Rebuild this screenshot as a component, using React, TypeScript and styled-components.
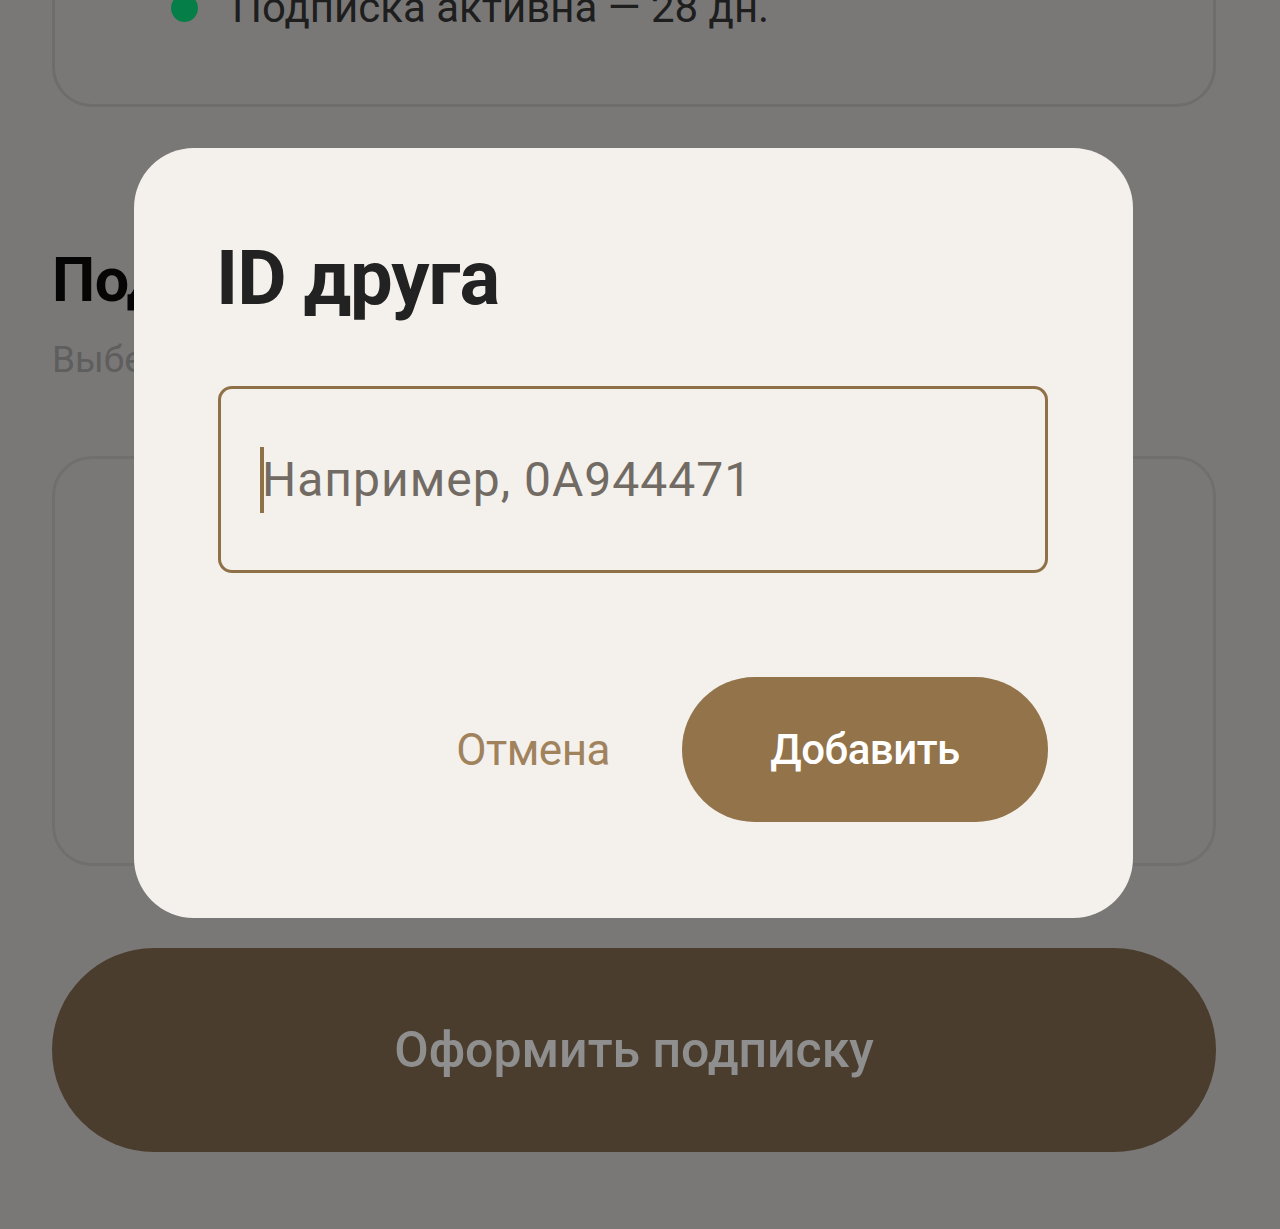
import React from "react";
import styled, { createGlobalStyle } from "styled-components";

const GlobalStyle = createGlobalStyle`
  html, body {
    margin: 0;
    padding: 0;
    background: #d9d7d5;
    overflow: hidden;
  }
  body {
    font-family: Roboto, "Noto Sans", Arial, sans-serif;
  }
  * { box-sizing: border-box; }
`;

const Page = styled.main`
  display: flex;
  flex-direction: column;
  padding: 0 64px 0 52px;
  margin-top: -91px;
  height: 1322px;
`;

const StatusCard = styled.section`
  border: 3px solid #c4c2bf;
  border-radius: 40px;
  padding: 72px 0 72px 116px;
  display: flex;
  align-items: center;
  gap: 34px;
`;

const Dot = styled.span`
  width: 27px;
  height: 28px;
  border-radius: 50%;
  background: #0ce07f;
  flex: none;
`;

const StatusText = styled.span`
  font-size: 42px;
  line-height: 48px;
  color: #363636;
`;

const SectionTitle = styled.h2`
  margin: 138px 0 0;
  font-size: 61px;
  line-height: 70px;
  font-weight: 700;
  color: #0a0a0a;
  letter-spacing: -0.5px;
`;

const SectionHint = styled.p`
  margin: 23px 0 0;
  font-size: 37px;
  line-height: 44px;
  color: #a8a8a8;
`;

const PlanCard = styled.section`
  margin-top: 74px;
  height: 410px;
  border: 3px solid #c8c6c3;
  border-radius: 40px;
`;

const SubmitButton = styled.button`
  margin-top: 82px;
  height: 204px;
  border: none;
  border-radius: 102px;
  background: #846d52;
  color: #ffffff;
  font-family: inherit;
  font-size: 50px;
  font-weight: 500;
`;

const Overlay = styled.div`
  position: fixed;
  inset: 0;
  background: rgba(0, 0, 0, 0.44);
  display: flex;
  align-items: flex-start;
  padding: 148px 0 0 134px;
`;

const Dialog = styled.div`
  width: 999px;
  height: 770px;
  border-radius: 60px;
  background: #f4f1ec;
  padding: 238px 85px 0 84px;
  display: flex;
  flex-direction: column;
  position: relative;
`;

const DialogTitle = styled.h1`
  position: absolute;
  top: 80px;
  left: 82px;
  margin: 0;
  font-size: 76px;
  line-height: 100px;
  font-weight: 700;
  color: #222222;
  letter-spacing: -1px;
`;

const Field = styled.label`
  height: 187px;
  border: 3px solid #8f7148;
  border-radius: 14px;
  display: flex;
  align-items: center;
  padding-left: 39px;
`;

const Caret = styled.span`
  width: 4px;
  height: 66px;
  background: #8f7148;
  flex: none;
  margin-right: -2px;
`;

const Input = styled.input`
  flex: 1;
  border: none;
  background: transparent;
  outline: none;
  font-family: inherit;
  font-size: 48px;
  letter-spacing: 1px;
  color: #2a2a2a;
  padding: 0;
  &::placeholder {
    color: #726b64;
  }
`;

const Actions = styled.div`
  margin-top: 104px;
  display: flex;
  justify-content: flex-end;
  align-items: center;
  gap: 50px;
`;

const CancelButton = styled.button`
  border: none;
  background: transparent;
  font-family: inherit;
  font-size: 44px;
  color: #a0825c;
  padding: 0 22px;
  height: 145px;
  letter-spacing: -0.5px;
`;

const AddButton = styled.button`
  width: 366px;
  height: 145px;
  border: none;
  border-radius: 73px;
  background: #92734a;
  color: #ffffff;
  font-family: inherit;
  font-size: 42px;
  font-weight: 500;
  letter-spacing: -0.5px;
`;

export default function App() {
  return (
    <>
      <GlobalStyle />
      <Page>
        <StatusCard>
          <Dot />
          <StatusText>Подписка активна — 28 дн.</StatusText>
        </StatusCard>
        <SectionTitle>Подарить подписку</SectionTitle>
        <SectionHint>Выберите срок подписки</SectionHint>
        <PlanCard />
        <SubmitButton>Оформить подписку</SubmitButton>
      </Page>
      <Overlay>
        <Dialog>
          <DialogTitle>ID друга</DialogTitle>
          <Field>
            <Caret />
            <Input placeholder="Например, 0A944471" />
          </Field>
          <Actions>
            <CancelButton>Отмена</CancelButton>
            <AddButton>Добавить</AddButton>
          </Actions>
        </Dialog>
      </Overlay>
    </>
  );
}
